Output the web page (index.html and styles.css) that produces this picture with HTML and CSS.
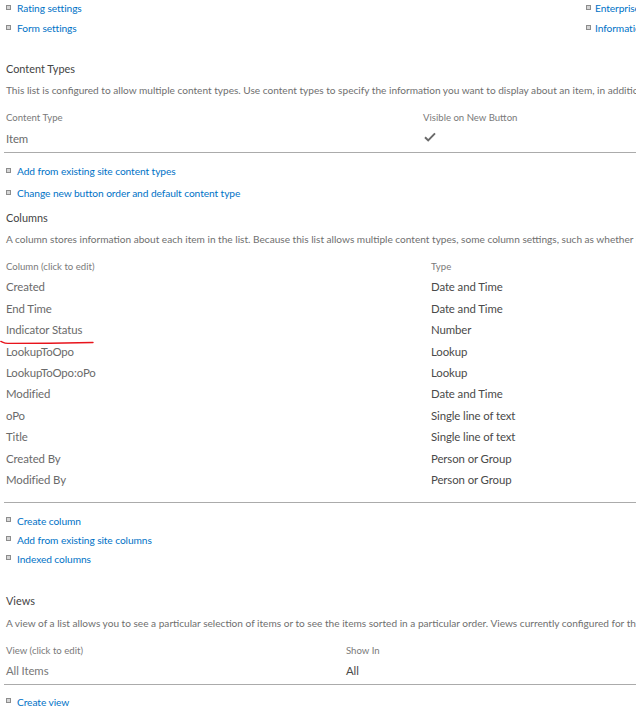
FILE: index.html
```html
<!DOCTYPE html>
<html>
<head>
<meta charset="utf-8">
<link rel="stylesheet" href="styles.css">
</head>
<body>
<div class="page">
  <div class="toplinks">
    <ul class="links col-left">
      <li><span class="bullet"></span><a href="#">Rating settings</a></li>
      <li><span class="bullet"></span><a href="#">Form settings</a></li>
    </ul>
    <ul class="links col-right">
      <li><span class="bullet"></span><a href="#">Enterprise Metadata and Keywords Settings</a></li>
      <li><span class="bullet"></span><a href="#">Information management policy settings</a></li>
    </ul>
  </div>

  <section class="sec sec-ct">
    <h3 class="heading">Content Types</h3>
    <p class="desc">This list is configured to allow multiple content types. Use content types to specify the information you want to display about an item, in addition to its policies, workflows, or other behavior. The following content types are currently available in this list:</p>
    <div class="table t-ct">
      <div class="thead"><span class="c1">Content Type</span><span class="c2">Visible on New Button</span></div>
      <div class="row last"><span class="c1">Item</span><span class="c2"><svg class="check" width="12" height="10" viewBox="0 0 12 10"><path d="M1 5.2 L4.2 8.4 L11 1.4" fill="none" stroke="#6a6a6a" stroke-width="2"/></svg></span></div>
    </div>
    <ul class="links l-22">
      <li><span class="bullet"></span><a href="#">Add from existing site content types</a></li>
      <li><span class="bullet"></span><a href="#">Change new button order and default content type</a></li>
    </ul>
  </section>

  <section class="sec sec-col">
    <h3 class="heading">Columns</h3>
    <p class="desc">A column stores information about each item in the list. Because this list allows multiple content types, some column settings, such as whether information is required or optional for a column, are now specified by the content type of the item. The following columns are currently available in this list:</p>
    <div class="table t-col">
      <div class="thead"><span class="c1">Column (click to edit)</span><span class="c2">Type</span></div>
      <div class="row"><span class="c1">Created</span><span class="c2">Date and Time</span></div>
      <div class="row"><span class="c1">End Time</span><span class="c2">Date and Time</span></div>
      <div class="row"><span class="c1 marked">Indicator Status<svg class="redline" width="100" height="8" viewBox="0 0 100 8"><path d="M0.8 2.4 C3 3.2 4 4.4 8 4.4 L50 4.2 L93 3.5" fill="none" stroke="#e8141c" stroke-width="1.4" stroke-linecap="round"/></svg></span><span class="c2">Number</span></div>
      <div class="row"><span class="c1">LookupToOpo</span><span class="c2">Lookup</span></div>
      <div class="row"><span class="c1">LookupToOpo:oPo</span><span class="c2">Lookup</span></div>
      <div class="row"><span class="c1">Modified</span><span class="c2">Date and Time</span></div>
      <div class="row"><span class="c1">oPo</span><span class="c2">Single line of text</span></div>
      <div class="row"><span class="c1">Title</span><span class="c2">Single line of text</span></div>
      <div class="row"><span class="c1">Created By</span><span class="c2">Person or Group</span></div>
      <div class="row last"><span class="c1">Modified By</span><span class="c2">Person or Group</span></div>
    </div>
    <ul class="links l-19">
      <li><span class="bullet"></span><a href="#">Create column</a></li>
      <li><span class="bullet"></span><a href="#">Add from existing site columns</a></li>
      <li><span class="bullet"></span><a href="#">Indexed columns</a></li>
    </ul>
  </section>

  <section class="sec sec-views">
    <h3 class="heading">Views</h3>
    <p class="desc">A view of a list allows you to see a particular selection of items or to see the items sorted in a particular order. Views currently configured for this list:</p>
    <div class="table t-views">
      <div class="thead"><span class="c1">View (click to edit)</span><span class="c2">Show In</span></div>
      <div class="row last"><span class="c1">All Items</span><span class="c2">All</span></div>
    </div>
    <ul class="links l-19">
      <li><span class="bullet"></span><a href="#">Create view</a></li>
    </ul>
  </section>
</div>
</body>
</html>
```

FILE: styles.css
```css
html, body {
  margin: 0;
  padding: 0;
  background: #ffffff;
}

body {
  font-family: Lato, "Open Sans", "Liberation Sans", sans-serif;
  color: #444444;
  overflow: hidden;
}

.page {
  width: 636px;
  margin-top: -2px;
  overflow: hidden;
}

.links {
  list-style: none;
  margin: 0;
  padding: 0;
}

.links li {
  display: flex;
  align-items: center;
  height: 20px;
  white-space: nowrap;
  font-size: 10.2px;
  letter-spacing: -0.08px;
}

.links a {
  color: #0072c6;
  text-decoration: none;
}

.bullet {
  display: inline-block;
  box-sizing: border-box;
  width: 5px;
  height: 5px;
  margin: 0 6px 2px 6px;
  border: 1px solid #8d8d8d;
  background: #d6d6d6;
  flex: none;
}

.toplinks {
  display: flex;
}

.col-left {
  width: 580px;
  flex: none;
}

.col-right li .bullet {
  margin-left: 6px;
  margin-right: 4px;
}

.heading {
  margin: 0;
  padding-left: 6px;
  font-weight: normal;
  font-size: 10.9px;
  line-height: 20px;
  height: 20px;
  color: #444444;
  white-space: nowrap;
}

.desc {
  margin: 2px 0 0 0;
  padding-left: 6px;
  font-size: 10.1px;
  line-height: 18px;
  height: 18px;
  color: #6f6f6f;
  white-space: nowrap;
  overflow: hidden;
}

.table {
  margin-left: 4px;
}

.thead {
  display: flex;
  height: 18px;
  align-items: center;
  font-size: 9.6px;
  color: #7a7a7a;
  white-space: nowrap;
}

.row {
  display: flex;
  align-items: center;
  white-space: nowrap;
  font-size: 11.4px;
  letter-spacing: -0.1px;
}

.c1 {
  padding-left: 2px;
  flex: none;
  position: relative;
}

.row .c1 {
  color: #6a6a6a;
}

.row .c2 {
  color: #4a4a4a;
}

/* Content types section */
.sec-ct {
  margin-top: 21px;
}

.t-ct {
  margin-top: 9px;
}

.t-ct .c1 {
  width: 417px;
}

.t-ct .row {
  height: 22px;
  margin-top: 1px;
  padding-bottom: 3px;
  border-bottom: 1px solid #ababab;
}

.check {
  display: block;
  margin-left: 1px;
  margin-top: -2px;
}

.links.l-22 {
  margin-top: 7px;
}

.links.l-22 li {
  height: 22px;
}

/* Columns section */
.sec-col {
  margin-top: 4px;
}

.t-col {
  margin-top: 9px;
}

.t-col .thead {
  margin-bottom: 1px;
}

.t-col .c1 {
  width: 425px;
}

.t-col .row {
  height: 21.45px;
}

.t-col .row.last {
  box-sizing: content-box;
  padding-bottom: 12px;
  border-bottom: 1px solid #ababab;
}

.marked .redline {
  position: absolute;
  left: -4px;
  top: 16px;
}

.links.l-19 li {
  height: 19px;
}

.sec-col .links.l-19 {
  margin-top: 8px;
}

/* Views section */
.sec-views {
  margin-top: 23px;
}

.sec-views .desc {
  margin-top: 3px;
}

.t-views {
  margin-top: 9px;
}

.t-views .c1 {
  width: 340px;
}

.t-views .row {
  height: 22px;
  padding-bottom: 3px;
  border-bottom: 1px solid #ababab;
}

.t-views .row .c1 {
  color: #777777;
}

.sec-views .links.l-19 {
  margin-top: 7px;
}
```
